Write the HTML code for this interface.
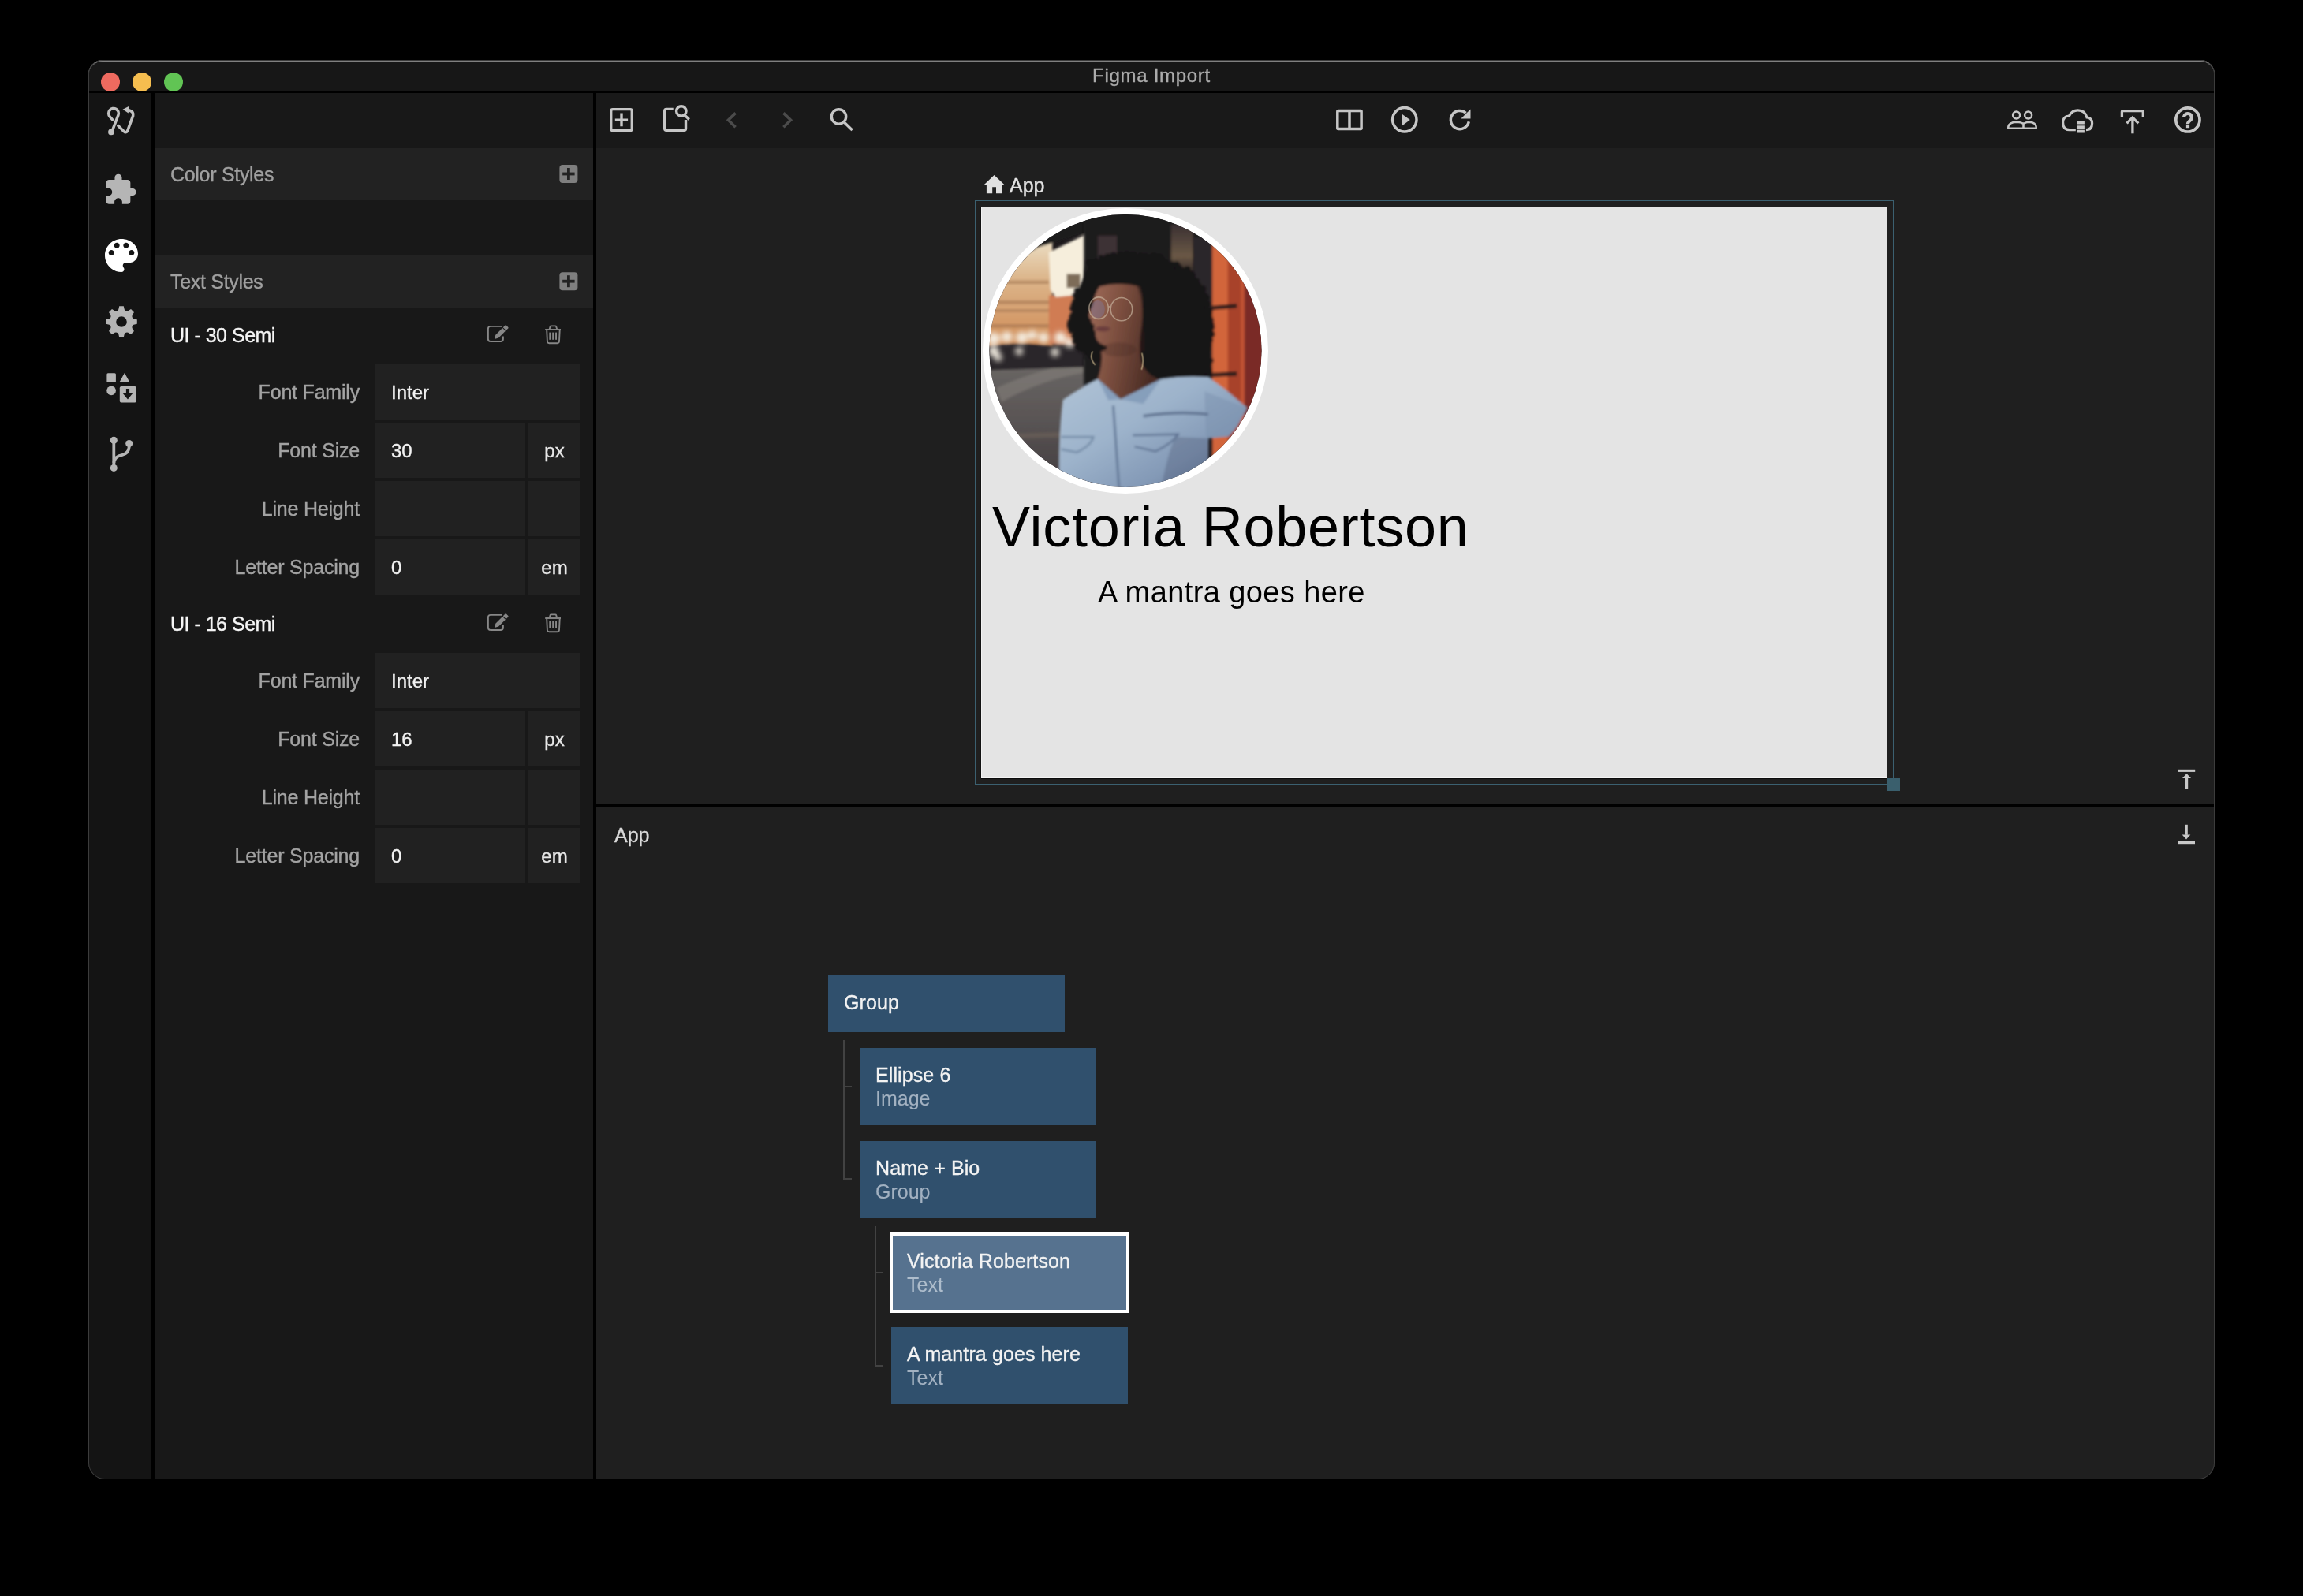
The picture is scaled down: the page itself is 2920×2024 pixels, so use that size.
<!DOCTYPE html>
<html><head><meta charset="utf-8"><title>Figma Import</title>
<style>
html,body{margin:0;padding:0;}
body{width:2920px;height:2024px;background:#000;position:relative;overflow:hidden;font-family:"Liberation Sans",sans-serif;}
.a{position:absolute;}
.t{position:absolute;line-height:1;white-space:pre;font-family:"Liberation Sans",sans-serif;-webkit-text-stroke:0.35px currentColor;}
.big{-webkit-text-stroke:0;}
#win{left:112px;top:76px;width:2696px;height:1800px;border-radius:20px;overflow:hidden;background:#151515;}
.lbl{font-size:25px;color:#a3a3a3;text-align:right;width:260px;left:196px;letter-spacing:-0.2px;}
.inp{background:#212121;}
.val{font-size:24px;color:#f2f2f2;}
.unit{font-size:24px;color:#e8e8e8;text-align:center;width:66px;}
.node{position:absolute;width:300px;background:#30506d;}
.nt{font-size:25px;color:#f3f3f3;letter-spacing:0.1px;}
.ns{font-size:25px;color:#a2b1c1;letter-spacing:0px;-webkit-text-stroke:0.1px currentColor;}
svg{position:absolute;overflow:visible;}
</style></head>
<body>
<div id="app" class="a" style="left:0;top:0;width:2920px;height:2024px;clip-path:inset(76px 112px 148px 112px round 18px 18px 21px 21px);will-change:transform;">
<div class="a" style="left:112px;top:76px;width:2696px;height:1800px;background:#151515;"></div>

<!-- window chrome -->
<div class="a" style="left:112px;top:76px;width:2696px;height:40px;background:#171717;"></div>
<div class="a" style="left:112px;top:116px;width:2696px;height:2px;background:#000;"></div>
<div class="a" style="left:128px;top:92px;width:24px;height:24px;border-radius:50%;background:#ee6a5f;"></div>
<div class="a" style="left:168px;top:92px;width:24px;height:24px;border-radius:50%;background:#f5bd4f;"></div>
<div class="a" style="left:208px;top:92px;width:24px;height:24px;border-radius:50%;background:#61c454;"></div>
<div class="t" style="left:1300px;width:320px;text-align:center;top:84px;font-size:24px;color:#ababab;letter-spacing:0.7px;">Figma Import</div>

<!-- sidebar -->
<div class="a" style="left:112px;top:118px;width:80px;height:1758px;background:#141414;"></div>
<div class="a" style="left:192px;top:118px;width:4px;height:1758px;background:#000;"></div>
<!-- panel -->
<div class="a" style="left:196px;top:118px;width:556px;height:1758px;background:#181818;"></div>
<div class="a" style="left:752px;top:118px;width:4px;height:1758px;background:#000;"></div>
<!-- main -->
<div class="a" style="left:756px;top:118px;width:2052px;height:70px;background:#191919;"></div>
<div class="a" style="left:756px;top:188px;width:2052px;height:832px;background:#1f1f1f;"></div>
<div class="a" style="left:756px;top:1020px;width:2052px;height:4px;background:#000;"></div>
<div class="a" style="left:756px;top:1024px;width:2052px;height:852px;background:#1f1f1f;"></div>

<!-- panel content -->
<div class="a" style="left:196px;top:188px;width:556px;height:66px;background:#222;"></div>
<div class="t" style="left:216px;top:209px;font-size:25px;color:#a0a0a0;letter-spacing:-0.3px;">Color Styles</div>
<div class="a" style="left:196px;top:324px;width:556px;height:66px;background:#222;"></div>
<div class="t" style="left:216px;top:345px;font-size:25px;color:#a0a0a0;letter-spacing:-0.3px;">Text Styles</div>
<div class="t" style="left:216px;top:413px;font-size:25px;color:#f5f5f5;letter-spacing:-0.5px;">UI - 30 Semi</div>
<div class="t" style="left:216px;top:779px;font-size:25px;color:#f5f5f5;letter-spacing:-0.5px;">UI - 16 Semi</div>

<!-- block 1 rows -->
<div class="t lbl" style="top:485px;">Font Family</div>
<div class="a inp" style="left:476px;top:462px;width:260px;height:70px;"></div>
<div class="t val" style="left:496px;top:486px;">Inter</div>
<div class="t lbl" style="top:559px;">Font Size</div>
<div class="a inp" style="left:476px;top:536px;width:190px;height:70px;"></div>
<div class="a inp" style="left:670px;top:536px;width:66px;height:70px;"></div>
<div class="t val" style="left:496px;top:560px;">30</div>
<div class="t unit" style="left:670px;top:560px;">px</div>
<div class="t lbl" style="top:633px;">Line Height</div>
<div class="a inp" style="left:476px;top:610px;width:190px;height:70px;"></div>
<div class="a inp" style="left:670px;top:610px;width:66px;height:70px;"></div>
<div class="t lbl" style="top:707px;">Letter Spacing</div>
<div class="a inp" style="left:476px;top:684px;width:190px;height:70px;"></div>
<div class="a inp" style="left:670px;top:684px;width:66px;height:70px;"></div>
<div class="t val" style="left:496px;top:708px;">0</div>
<div class="t unit" style="left:670px;top:708px;">em</div>

<!-- block 2 rows -->
<div class="t lbl" style="top:851px;">Font Family</div>
<div class="a inp" style="left:476px;top:828px;width:260px;height:70px;"></div>
<div class="t val" style="left:496px;top:852px;">Inter</div>
<div class="t lbl" style="top:925px;">Font Size</div>
<div class="a inp" style="left:476px;top:902px;width:190px;height:70px;"></div>
<div class="a inp" style="left:670px;top:902px;width:66px;height:70px;"></div>
<div class="t val" style="left:496px;top:926px;">16</div>
<div class="t unit" style="left:670px;top:926px;">px</div>
<div class="t lbl" style="top:999px;">Line Height</div>
<div class="a inp" style="left:476px;top:976px;width:190px;height:70px;"></div>
<div class="a inp" style="left:670px;top:976px;width:66px;height:70px;"></div>
<div class="t lbl" style="top:1073px;">Letter Spacing</div>
<div class="a inp" style="left:476px;top:1050px;width:190px;height:70px;"></div>
<div class="a inp" style="left:670px;top:1050px;width:66px;height:70px;"></div>
<div class="t val" style="left:496px;top:1074px;">0</div>
<div class="t unit" style="left:670px;top:1074px;">em</div>

<!-- canvas -->
<div class="t" style="left:1280px;top:223px;font-size:25px;color:#e2e2e2;">App</div>
<div class="a" style="left:1236px;top:253px;width:1162px;height:739px;border:2px solid #3b6070;"></div>
<div class="a" style="left:1244px;top:262px;width:1149px;height:725px;background:#e4e4e4;box-shadow:inset 1px 0 0 #f2f2f2, inset -1px 0 0 #f4f4f4, inset 0 -1px 0 #f4f4f4, 0 1px 0 #0c0c0c, -1px 0 0 #121212;"></div>
<div class="a" style="left:2393px;top:987px;width:16px;height:16px;background:#3a5f6d;"></div>

<!-- avatar -->
<div class="a" style="left:1246px;top:263.5px;width:362px;height:362px;border-radius:50%;background:#fff;"></div>
<svg style="left:1250px;top:268px" width="354" height="354" viewBox="0 0 1596 1596">
 <defs>
  <clipPath id="pc"><circle cx="798" cy="796" r="778"/></clipPath>
  <filter id="bl" x="-5%" y="-5%" width="110%" height="110%"><feGaussianBlur stdDeviation="7"/></filter>
  <filter id="bl2" x="-30%" y="-30%" width="160%" height="160%"><feGaussianBlur stdDeviation="16"/></filter>
  <filter id="bl3" x="-10%" y="-10%" width="120%" height="120%"><feGaussianBlur stdDeviation="3"/></filter>
  <linearGradient id="street" x1="0" y1="0" x2="0" y2="1"><stop offset="0" stop-color="#6a6765"/><stop offset="0.45" stop-color="#5a5555"/><stop offset="1" stop-color="#403a3d"/></linearGradient>
  <linearGradient id="bld" x1="0" y1="0" x2="0" y2="1"><stop offset="0" stop-color="#eadbc0"/><stop offset="0.35" stop-color="#dcb58a"/><stop offset="1" stop-color="#cf8a55"/></linearGradient>
  <linearGradient id="denim" x1="0" y1="0" x2="1" y2="1"><stop offset="0" stop-color="#b0c3d6"/><stop offset="0.4" stop-color="#9db3cb"/><stop offset="0.7" stop-color="#8399b6"/><stop offset="1" stop-color="#5a6a88"/></linearGradient>
  <linearGradient id="skin" x1="0" y1="0" x2="1" y2="0.3"><stop offset="0" stop-color="#a06c5a"/><stop offset="0.45" stop-color="#7e5040"/><stop offset="1" stop-color="#4a2c24"/></linearGradient>
  <linearGradient id="pill" x1="0" y1="0" x2="0" y2="1"><stop offset="0" stop-color="#3a3032"/><stop offset="0.6" stop-color="#6a5845"/><stop offset="1" stop-color="#2a2224"/></linearGradient>
 </defs>
 <g clip-path="url(#pc)">
  <rect x="0" y="0" width="1596" height="1596" fill="#1e1a1d"/>
  <g filter="url(#bl)">
   <path d="M0,860 L600,850 L620,1596 L0,1596Z" fill="url(#street)"/>
   <path d="M60,1010 Q300,900 560,860 L580,920 Q320,960 90,1090Z" fill="#86827c" opacity="0.55"/>
   <path d="M150,1270 L520,1260 L520,1290 L150,1300Z" fill="#6e6258" opacity="0.6"/>
   <rect x="0" y="180" width="380" height="590" fill="url(#bld)"/>
   <g fill="#a27450" opacity="0.6">
    <rect x="30" y="395" width="330" height="20"/><rect x="30" y="510" width="330" height="20"/><rect x="30" y="560" width="330" height="16"/><rect x="30" y="645" width="330" height="20"/>
   </g>
   <path d="M360,480 L545,480 L545,760 L360,760Z" fill="#d07b52"/>
   <path d="M360,235 L575,130 L600,150 L565,340 L550,475 L400,490 L370,450Z" fill="#f6eedc"/>
   <rect x="462" y="358" width="78" height="80" fill="#7d6c58"/>
   <path d="M250,232 L300,205 L600,115 L620,0 L0,0 L0,232Z" fill="#1e1a1d"/>
   <path d="M0,770 Q150,745 300,760 Q450,770 560,790 L570,890 L0,910Z" fill="#2a2629"/>
  </g>
  <g filter="url(#bl2)" fill="#f4eee2">
   <circle cx="45" cy="728" r="36"/><circle cx="120" cy="718" r="32"/><circle cx="205" cy="722" r="34"/><circle cx="265" cy="708" r="28"/>
   <circle cx="330" cy="722" r="30"/><circle cx="425" cy="722" r="34"/><circle cx="480" cy="752" r="28"/><circle cx="45" cy="800" r="30"/>
   <circle cx="70" cy="835" r="22"/><circle cx="190" cy="800" r="22"/><circle cx="395" cy="805" r="24"/>
  </g>
  <g filter="url(#bl)">
   <rect x="560" y="0" width="735" height="1000" fill="#1e1a1e"/>
   <rect x="1058" y="75" width="125" height="300" fill="url(#pill)"/>
   <rect x="640" y="140" width="110" height="220" fill="#3c3336"/>
   <rect x="1190" y="150" width="100" height="850" fill="#2a2629"/>
   <rect x="1293" y="0" width="95" height="1596" fill="#d2653a"/>
   <rect x="1383" y="0" width="80" height="1596" fill="#a8432b"/>
   <rect x="1458" y="0" width="22" height="1596" fill="#c45434"/>
   <rect x="1478" y="0" width="130" height="1596" fill="#7a2c26"/>
   <path d="M1290,552 L1435,540" stroke="#2a1a1a" stroke-width="24"/>
   <path d="M1290,935 L1435,928" stroke="#2a1a1a" stroke-width="24"/>
   <path d="M600,300 Q680,250 800,250 Q960,255 1060,300 Q1170,350 1235,450 Q1285,570 1282,720 L1278,955 L1000,968 L850,940 Q760,905 680,880 Q600,850 530,780 Q480,690 495,560 Q525,430 600,300Z" fill="#161215"/>
   <g fill="#161215"><circle cx="596" cy="293" r="21"/><circle cx="611" cy="291" r="18"/><circle cx="631" cy="281" r="14"/><circle cx="659" cy="263" r="15"/><circle cx="678" cy="269" r="15"/><circle cx="698" cy="263" r="23"/><circle cx="730" cy="256" r="24"/><circle cx="743" cy="263" r="17"/><circle cx="769" cy="246" r="17"/><circle cx="806" cy="246" r="20"/><circle cx="829" cy="250" r="19"/><circle cx="845" cy="245" r="16"/><circle cx="884" cy="254" r="17"/><circle cx="908" cy="255" r="17"/><circle cx="939" cy="261" r="16"/><circle cx="961" cy="259" r="23"/><circle cx="990" cy="264" r="24"/><circle cx="1002" cy="277" r="22"/><circle cx="1028" cy="289" r="14"/><circle cx="1063" cy="305" r="20"/><circle cx="1090" cy="307" r="21"/><circle cx="1106" cy="322" r="19"/><circle cx="1133" cy="340" r="19"/><circle cx="1151" cy="333" r="21"/><circle cx="1173" cy="362" r="22"/><circle cx="1179" cy="369" r="21"/><circle cx="1186" cy="390" r="16"/><circle cx="1201" cy="402" r="22"/><circle cx="1215" cy="425" r="18"/><circle cx="1242" cy="442" r="18"/><circle cx="1245" cy="482" r="22"/><circle cx="1261" cy="494" r="18"/><circle cx="1260" cy="530" r="24"/><circle cx="1266" cy="540" r="16"/><circle cx="1277" cy="570" r="20"/><circle cx="1277" cy="585" r="18"/><circle cx="1279" cy="621" r="24"/><circle cx="1286" cy="645" r="20"/><circle cx="1286" cy="661" r="23"/><circle cx="1288" cy="702" r="22"/><circle cx="1280" cy="718" r="15"/><circle cx="1284" cy="737" r="15"/><circle cx="1275" cy="765" r="17"/><circle cx="1272" cy="788" r="16"/><circle cx="1272" cy="822" r="14"/><circle cx="1287" cy="853" r="15"/><circle cx="1274" cy="874" r="18"/><circle cx="1271" cy="910" r="24"/><circle cx="1278" cy="929" r="15"/><circle cx="1270" cy="952" r="17"/><circle cx="1259" cy="950" r="14"/><circle cx="1236" cy="960" r="15"/><circle cx="1202" cy="952" r="19"/><circle cx="1185" cy="970" r="21"/><circle cx="1145" cy="962" r="16"/><circle cx="1130" cy="966" r="22"/><circle cx="1097" cy="960" r="22"/><circle cx="1085" cy="974" r="22"/><circle cx="1056" cy="972" r="16"/><circle cx="1025" cy="965" r="14"/><circle cx="991" cy="964" r="17"/><circle cx="979" cy="972" r="18"/><circle cx="959" cy="968" r="24"/><circle cx="922" cy="948" r="16"/><circle cx="894" cy="943" r="20"/><circle cx="883" cy="951" r="19"/><circle cx="853" cy="946" r="15"/><circle cx="829" cy="940" r="22"/><circle cx="806" cy="922" r="16"/><circle cx="783" cy="911" r="22"/><circle cx="762" cy="904" r="18"/><circle cx="738" cy="902" r="16"/><circle cx="697" cy="882" r="23"/><circle cx="686" cy="873" r="22"/><circle cx="668" cy="869" r="18"/><circle cx="638" cy="844" r="14"/><circle cx="625" cy="840" r="19"/><circle cx="603" cy="822" r="23"/><circle cx="579" cy="803" r="17"/><circle cx="547" cy="789" r="20"/><circle cx="525" cy="778" r="15"/><circle cx="528" cy="755" r="19"/><circle cx="512" cy="743" r="18"/><circle cx="508" cy="713" r="19"/><circle cx="490" cy="680" r="18"/><circle cx="485" cy="654" r="22"/><circle cx="485" cy="637" r="21"/><circle cx="494" cy="609" r="19"/><circle cx="495" cy="592" r="15"/><circle cx="496" cy="555" r="17"/><circle cx="506" cy="534" r="20"/><circle cx="512" cy="516" r="18"/><circle cx="515" cy="482" r="19"/><circle cx="523" cy="455" r="19"/></g>
   <path d="M650,430 Q760,400 880,430 Q905,520 892,650 Q875,760 885,850 Q905,930 1000,965 L770,1075 L640,958 Q668,880 660,800 Q700,790 690,770 Q650,760 635,735 Q622,705 628,690 Q610,672 622,652 Q600,640 603,620 Q585,605 590,585 Q598,560 610,540 Q615,500 628,470 Q638,445 650,430Z" fill="url(#skin)"/>
   <ellipse cx="668" cy="672" rx="42" ry="15" fill="#6a3c3c"/>
   <ellipse cx="760" cy="790" rx="100" ry="40" fill="#3a2420" opacity="0.25"/>
   <path d="M860,420 Q905,520 890,650 Q875,740 880,800 L905,800 Q910,600 880,430Z" fill="#2a1c1c" opacity="0.6"/>
   <path d="M440,1078 Q520,1020 640,958 L770,1075 L1000,960 Q1130,938 1273,948 L1368,1018 L1493,1123 L1440,1225 L1388,1288 L1273,1298 L1270,1596 L420,1596 Q410,1300 440,1078Z" fill="url(#denim)"/>
   <path d="M1273,1298 L1270,1596 L1000,1596 Q1030,1420 1080,1290Z" fill="#4a5672" opacity="0.35"/>
   <path d="M1250,1030 L1490,1125 L1440,1225 L1388,1288 L1260,1298Z" fill="#7b90ae" opacity="0.45"/>
   <path d="M900,1170 Q1100,1140 1270,1160" stroke="#5e7290" stroke-width="16" fill="none"/>
   <path d="M430,1290 L615,1290 Q600,1340 520,1378 L430,1360" stroke="#6e86a2" stroke-width="10" fill="none"/>
   <path d="M840,1280 L1100,1275 Q1060,1330 970,1372 L850,1345" stroke="#5a6e8e" stroke-width="10" fill="none"/>
   <path d="M728,1110 L762,1596" stroke="#5f7594" stroke-width="12"/>
   <path d="M640,958 L700,1080 L770,1075 Z M1000,960 L900,1100 L770,1075Z" fill="#7f98b6" opacity="0.8"/>
  </g>
  <g filter="url(#bl3)">
   <ellipse cx="640" cy="560" rx="40" ry="50" fill="#6f86d0" opacity="0.25"/>
   
   <g fill="none" stroke="#cdbca6" stroke-width="7" opacity="0.65">
    <ellipse cx="645" cy="553" rx="55" ry="62"/>
    <ellipse cx="775" cy="560" rx="62" ry="66"/>
    <path d="M700,545 L713,546"/>
   </g>
   <g fill="none" stroke="#c8b48a" stroke-width="7" opacity="0.85">
    <path d="M610,800 Q590,840 625,878"/>
    <path d="M892,810 Q905,860 890,905"/>
   </g>
  </g>
 </g>
</svg>

<div class="t big" style="left:1258px;top:632px;font-size:72px;color:#000;letter-spacing:0.76px;">Victoria Robertson</div>
<div class="t big" style="left:1392px;top:732px;font-size:38px;color:#000;letter-spacing:0.4px;">A mantra goes here</div>

<!-- bottom panel -->
<div class="t" style="left:779px;top:1047px;font-size:25px;color:#dadada;">App</div>

<div class="node" style="left:1050px;top:1237px;height:72px;"></div>
<div class="t nt" style="left:1070px;top:1259px;">Group</div>
<div class="node" style="left:1090px;top:1329px;height:98px;"></div>
<div class="t nt" style="left:1110px;top:1351px;">Ellipse 6</div>
<div class="t ns" style="left:1110px;top:1381px;">Image</div>
<div class="node" style="left:1090px;top:1447px;height:98px;"></div>
<div class="t nt" style="left:1110px;top:1469px;">Name + Bio</div>
<div class="t ns" style="left:1110px;top:1499px;">Group</div>
<div class="node" style="left:1128px;top:1563px;width:296px;height:94px;background:#56728f;border:4px solid #fff;"></div>
<div class="t nt" style="left:1150px;top:1587px;">Victoria Robertson</div>
<div class="t ns" style="left:1150px;top:1617px;color:#aebdcc;">Text</div>
<div class="node" style="left:1130px;top:1683px;height:98px;"></div>
<div class="t nt" style="left:1150px;top:1705px;">A mantra goes here</div>
<div class="t ns" style="left:1150px;top:1735px;">Text</div>

<div class="a" style="left:1069px;top:1319px;width:2px;height:177px;background:#424242;"></div>
<div class="a" style="left:1069px;top:1377px;width:11px;height:2px;background:#424242;"></div>
<div class="a" style="left:1069px;top:1494px;width:11px;height:2px;background:#424242;"></div>
<div class="a" style="left:1109px;top:1555px;width:2px;height:178px;background:#424242;"></div>
<div class="a" style="left:1109px;top:1613px;width:11px;height:2px;background:#424242;"></div>
<div class="a" style="left:1109px;top:1731px;width:11px;height:2px;background:#424242;"></div>


<!-- ICONS: sidebar -->
<svg style="left:130px;top:130px" width="48" height="48" viewBox="0 0 1596 1596">
 <g fill="none" stroke="#c0c0c0" stroke-width="118" stroke-linecap="round" stroke-linejoin="round">
  <path d="M397,1226 L661,535 A210,210 0 1,0 310,601 L415,718"/>
  <path d="M660,978 L905,1225 Q975,1295 1045,1215 L1285,560 Q1320,380 1130,330"/>
 </g>
 <circle cx="365" cy="1245" r="128" fill="#c0c0c0"/>
 <path d="M850,290 L1115,160 L1090,450Z" fill="#c0c0c0"/>
</svg>
<svg style="left:131.4px;top:219.2px" width="43.4" height="43.4" viewBox="0 0 24 24"><path fill="#b5b5b5" d="M20.5 11H19V7c0-1.1-.9-2-2-2h-4V3.5C13 2.12 11.88 1 10.5 1S8 2.12 8 3.5V5H4c-1.1 0-1.99.9-1.99 2v3.8H3.5c1.49 0 2.7 1.21 2.7 2.7s-1.21 2.7-2.7 2.7H2V20c0 1.1.9 2 2 2h3.8v-1.5c0-1.49 1.21-2.7 2.7-2.7 1.49 0 2.7 1.21 2.7 2.7V22H17c1.1 0 2-.9 2-2v-4h1.5c1.38 0 2.5-1.12 2.5-2.5S21.88 11 20.5 11z"/></svg>
<svg style="left:126px;top:296px" width="56" height="56" viewBox="0 0 24 24"><path fill="#ffffff" d="M12 3c-4.97 0-9 4.03-9 9s4.03 9 9 9c.83 0 1.5-.67 1.5-1.5 0-.39-.15-.74-.39-1.01-.23-.26-.38-.61-.38-.99 0-.83.67-1.5 1.5-1.5H16c2.76 0 5-2.24 5-5 0-4.42-4.03-8-9-8zm-5.5 9c-.83 0-1.5-.67-1.5-1.5S5.67 9 6.5 9 8 9.670 8 10.5 7.33 12 6.5 12zm3-4C8.67 8 8 7.33 8 6.5S8.67 5 9.5 5s1.5.67 1.5 1.5S10.33 8 9.5 8zm5 0c-.83 0-1.5-.67-1.5-1.5S13.67 5 14.5 5s1.5.67 1.5 1.5S15.33 8 14.5 8zm3 4c-.83 0-1.5-.67-1.5-1.5S16.67 9 17.5 9s1.5.67 1.5 1.5-.67 1.5-1.5 1.5z"/></svg>
<svg style="left:154px;top:408px" width="1" height="1" viewBox="0 0 1 1"><path fill="#b5b5b5" fill-rule="evenodd" d="M-3.76,-15.55 L-2.79,-19.80 L2.79,-19.80 L3.76,-15.55 Q5.28,-12.75 8.33,-13.66 L12.03,-15.98 L15.98,-12.03 L13.66,-8.33 Q12.75,-5.28 15.55,-3.76 L19.80,-2.79 L19.80,2.79 L15.55,3.76 Q12.75,5.28 13.66,8.33 L15.98,12.03 L12.03,15.98 L8.33,13.66 Q5.28,12.75 3.76,15.55 L2.79,19.80 L-2.79,19.80 L-3.76,15.55 Q-5.28,12.75 -8.33,13.66 L-12.03,15.98 L-15.98,12.03 L-13.66,8.33 Q-12.75,5.28 -15.55,3.76 L-19.80,2.79 L-19.80,-2.79 L-15.55,-3.76 Q-12.75,-5.28 -13.66,-8.33 L-15.98,-12.03 L-12.03,-15.98 L-8.33,-13.66 Q-5.28,-12.75 -3.76,-15.55Z M6.8,0 A6.8,6.8 0 1,0 -6.8,0 A6.8,6.8 0 1,0 6.8,0Z"/></svg>
<svg style="left:0;top:0" width="1" height="1" viewBox="0 0 1 1">
 <g fill="#b5b5b5">
  <rect x="135.4" y="473.3" width="11.5" height="11.7" rx="1.5"/>
  <path d="M157.9,473.1 L164.6,485.1 L151.3,485.1Z"/>
  <circle cx="141.1" cy="495.4" r="5.8"/>
  <rect x="151.8" y="489.7" width="20.9" height="20.9" rx="2.6"/>
 </g>
 <g fill="#141414">
  <rect x="159.9" y="493" width="4.2" height="7.5"/>
  <path d="M155.9,499 L168.1,499 L162,506.5Z"/>
 </g>
 <g fill="none" stroke="#b5b5b5" stroke-width="3.8">
  <path d="M144.3,558 L144.3,593.5"/>
  <path d="M163.7,562.7 L163.7,567 Q163,575 155,576.8 Q145,578.5 144.4,587"/>
 </g>
 <g fill="#b5b5b5">
  <circle cx="144.3" cy="558.2" r="4.5"/>
  <circle cx="144.3" cy="593.4" r="4.5"/>
  <circle cx="163.7" cy="562.5" r="4.5"/>
 </g>
</svg>

<!-- panel icons -->
<svg style="left:0;top:0" width="1" height="1" viewBox="0 0 1 1">
 <g id="plusbox">
  <rect x="709.4" y="209" width="23" height="23" rx="4" fill="#7f7f7f"/>
  <rect x="713.2" y="218.6" width="15.4" height="3.8" fill="#222"/>
  <rect x="719" y="213" width="3.8" height="15" fill="#222"/>
 </g>
 <g transform="translate(0,136.2)">
  <rect x="709.4" y="209" width="23" height="23" rx="4" fill="#7f7f7f"/>
  <rect x="713.2" y="218.6" width="15.4" height="3.8" fill="#222"/>
  <rect x="719" y="213" width="3.8" height="15" fill="#222"/>
 </g>
 <g id="editdel">
  <path d="M636.3,413.9 L622,413.9 Q618.9,413.9 618.9,417 L618.9,429.9 Q618.9,433 622,433 L634.8,433 Q637.9,433 637.9,429.9 L637.9,426.5" fill="none" stroke="#878787" stroke-width="1.9"/>
  <path d="M627,429.9 L628.3,424.8 L637.1,416 L640.9,419.8 L632.1,428.6Z" fill="#878787"/>
  <path d="M637.8,415.3 L640.5,412.6 Q641.2,411.9 641.9,412.6 L644.3,415 Q645,415.7 644.3,416.4 L641.6,419.1Z" fill="#878787"/>
  <path d="M691.2,418 L711,418" stroke="#878787" stroke-width="1.9" fill="none"/>
  <path d="M696.6,417.5 L697.6,414.2 Q697.9,413.4 698.8,413.4 L704,413.4 Q704.9,413.4 705.2,414.2 L706.2,417.5" stroke="#878787" stroke-width="1.9" fill="none"/>
  <path d="M693.2,418.5 L693.9,433 Q694.1,435.2 696.3,435.2 L706.6,435.2 Q708.8,435.2 709,433 L709.7,418.5" stroke="#878787" stroke-width="1.9" fill="none"/>
  <rect x="696.3" y="421.6" width="1.9" height="9.2" fill="#878787"/>
  <rect x="700.2" y="421.6" width="1.9" height="9.2" fill="#878787"/>
  <rect x="704.1" y="421.6" width="1.9" height="9.2" fill="#878787"/>
 </g>
 <g transform="translate(0,366)">
  <path d="M636.3,413.9 L622,413.9 Q618.9,413.9 618.9,417 L618.9,429.9 Q618.9,433 622,433 L634.8,433 Q637.9,433 637.9,429.9 L637.9,426.5" fill="none" stroke="#878787" stroke-width="1.9"/>
  <path d="M627,429.9 L628.3,424.8 L637.1,416 L640.9,419.8 L632.1,428.6Z" fill="#878787"/>
  <path d="M637.8,415.3 L640.5,412.6 Q641.2,411.9 641.9,412.6 L644.3,415 Q645,415.7 644.3,416.4 L641.6,419.1Z" fill="#878787"/>
  <path d="M691.2,418 L711,418" stroke="#878787" stroke-width="1.9" fill="none"/>
  <path d="M696.6,417.5 L697.6,414.2 Q697.9,413.4 698.8,413.4 L704,413.4 Q704.9,413.4 705.2,414.2 L706.2,417.5" stroke="#878787" stroke-width="1.9" fill="none"/>
  <path d="M693.2,418.5 L693.9,433 Q694.1,435.2 696.3,435.2 L706.6,435.2 Q708.8,435.2 709,433 L709.7,418.5" stroke="#878787" stroke-width="1.9" fill="none"/>
  <rect x="696.3" y="421.6" width="1.9" height="9.2" fill="#878787"/>
  <rect x="700.2" y="421.6" width="1.9" height="9.2" fill="#878787"/>
  <rect x="704.1" y="421.6" width="1.9" height="9.2" fill="#878787"/>
 </g>
</svg>

<!-- toolbar icons -->
<svg style="left:0;top:0" width="1" height="1" viewBox="0 0 1 1">
 <g fill="none" stroke="#c6c6c6" stroke-width="3.4">
  <rect x="774.7" y="138.6" width="26.6" height="26.8" rx="2.2"/>
  <path d="M779.8,152.1 L796.1,152.1 M788,143.6 L788,160.3"/>
  <path d="M853.7,138.4 L845,138.4 Q842.7,138.4 842.7,140.7 L842.7,163 Q842.7,165.3 845,165.3 L867.2,165.3 Q869.5,165.3 869.5,163 L869.5,152.1"/>
  <circle cx="863.8" cy="140.9" r="6.2"/>
  <path d="M868.3,146.2 L873.8,151.4"/>
  <path d="M1060.3,145.5 m-9.2,0 a9.2,9.2 0 1,0 18.4,0 a9.2,9.2 0 1,0 -18.4,0" transform="translate(3.2,2.4)"/>
  <path d="M1070.5,155.3 L1080.6,165"/>
 </g>
 <g fill="none" stroke="#4b4b4b" stroke-width="3.6">
  <path d="M932.6,143.4 L923.4,152.3 L932.6,161.2"/>
  <path d="M993.4,143.4 L1002.6,152.3 L993.4,161.2"/>
 </g>
 <g fill="none" stroke="#c6c6c6" stroke-width="3.5">
  <rect x="1695.8" y="140.5" width="30.3" height="22.9" rx="1"/>
  <path d="M1711,140.5 L1711,163.4"/>
  <circle cx="1780.8" cy="151.8" r="15.2"/>
  <path d="M1862.3,154.4 A11.6,11.6 0 1,1 1858.6,143.3"/>
 </g>
 <g fill="#c6c6c6">
  <path d="M1778,145 L1787.8,152.1 L1778,159.3Z"/>
  <path d="M1852.4,150.4 L1864.5,138.6 L1864.5,150.4Z"/>
 </g>
 <g fill="none" stroke="#c6c6c6" stroke-width="2.5">
  <circle cx="2556.6" cy="146" r="4.5"/>
  <circle cx="2571.6" cy="146" r="4.5"/>
  <path d="M2546.3,162.8 L2546.3,160.8 Q2547,155 2556.6,154.7 Q2562.5,154.7 2565.5,157 Q2568.5,154.7 2572.5,154.7 Q2581,155 2581.7,160.8 L2581.7,162.8 Z M2565.5,157 L2565.5,162.8"/>
  <path d="M2631.8,164.6 L2624,164.6 Q2615.6,164.6 2615.6,155.5 Q2615.6,147.5 2623.5,147 Q2627,139.8 2634.6,139.8 Q2643.5,139.8 2646,149 Q2652.6,149.5 2652.6,156.5 Q2652.6,164.6 2645,164.6" stroke-width="3.2"/>
 </g>
 <g fill="#c6c6c6">
  <rect x="2634" y="153.9" width="8.9" height="3.6"/>
  <rect x="2634" y="159.3" width="8.9" height="3.7"/>
  <rect x="2634" y="164.7" width="8.9" height="3.8"/>
 </g>
 <g fill="none" stroke="#c6c6c6" stroke-width="3.3">
  <path d="M2690.4,148.4 L2690.4,142 Q2690.4,140.7 2691.7,140.7 L2716,140.7 Q2717.3,140.7 2717.3,142 L2717.3,148.4"/>
  <path d="M2703.9,150 L2703.9,169.3"/>
  <path d="M2696.5,156.3 L2703.9,149 L2711.3,156.3"/>
  <circle cx="2773.9" cy="151.9" r="15.1" stroke-width="3.7"/>
  <path d="M2769,148.9 A4.9,4.9 0 1,1 2777.4,152.4 Q2773.9,154.8 2773.9,157.2" stroke-width="4.1"/>
 </g>
 <rect x="2771.9" y="158.5" width="4.2" height="3.7" fill="#c6c6c6"/>
</svg>

<!-- canvas small icons -->
<svg style="left:0;top:0" width="1" height="1" viewBox="0 0 1 1">
 <path fill="#e0e0e0" d="M1260.6,222.1 L1273.5,234.3 L1270.3,234.3 L1270.3,245.2 L1263,245.2 L1263,237.3 L1258.2,237.3 L1258.2,245.2 L1250.9,245.2 L1250.9,234.3 L1247.7,234.3Z"/>
 <g fill="#c8c8c8">
  <rect x="2762" y="975.8" width="21.2" height="3.1"/>
  <rect x="2770.7" y="986" width="3.5" height="14.2"/>
  <path d="M2767,987 L2772.5,981 L2778,987Z"/>
  <rect x="2761" y="1066.9" width="22" height="3.3"/>
  <rect x="2770.3" y="1045.8" width="3.5" height="13"/>
  <path d="M2766.7,1058.5 L2777.3,1058.5 L2772,1064.4Z"/>
 </g>
</svg>

</div>
<div class="a" style="left:112px;top:76px;width:2696px;height:1800px;border-radius:18px 18px 21px 21px;box-shadow:inset 0 0 0 1px #3c3c3c, inset 0 2px 0 0 #808080;pointer-events:none;"></div>
</body></html>
